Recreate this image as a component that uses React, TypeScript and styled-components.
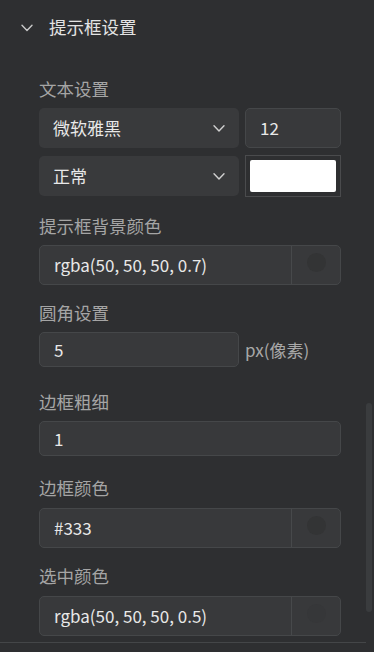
import React from 'react';
import styled, { createGlobalStyle } from 'styled-components';

const GlobalStyle = createGlobalStyle`
  html, body {
    margin: 0;
    padding: 0;
    background: #2e2f31;
  }
  body {
    font-family: 'Noto Sans CJK SC', 'Noto Sans', sans-serif;
  }
`;

const Chevron = ({ width, height }: { width: number; height: number }) => (
  <svg width={width} height={height} viewBox="0 0 12 8" fill="none">
    <path d="M1 1.2 L6 6.6 L11 1.2" stroke="currentColor" strokeWidth="1.4" strokeLinecap="round" strokeLinejoin="round" />
  </svg>
);

type ColorFieldProps = { value: string; swatch: string };

const ColorField = ({ value, swatch }: ColorFieldProps) => (
  <ColorInput>
    <ValueText>{value}</ValueText>
    <SwatchCell>
      <Dot style={{ background: swatch }} />
    </SwatchCell>
  </ColorInput>
);

const App = () => {
  return (
    <>
      <GlobalStyle />
      <Panel>
        <Header>
          <HeaderIcon>
            <Chevron width={12} height={8} />
          </HeaderIcon>
          <Title>提示框设置</Title>
        </Header>

        <Body>
          <Field $top={23}>
            <Label>文本设置</Label>
            <Row>
              <Select>
                <ValueText>微软雅黑</ValueText>
                <SelectArrow>
                  <Chevron width={12} height={9} />
                </SelectArrow>
              </Select>
              <TextInput $height={40}>
                <ValueText>12</ValueText>
              </TextInput>
            </Row>
            <Row $top={7}>
              <Select>
                <ValueText>正常</ValueText>
                <SelectArrow>
                  <Chevron width={12} height={9} />
                </SelectArrow>
              </Select>
              <SwatchBox>
                <SwatchFill />
              </SwatchBox>
            </Row>
          </Field>

          <Field $top={17}>
            <Label>提示框背景颜色</Label>
            <ColorField value="rgba(50, 50, 50, 0.7)" swatch="#333435" />
          </Field>

          <Field $top={16}>
            <Label>圆角设置</Label>
            <Row>
              <TextInput $height={35} $width={200}>
                <ValueText>5</ValueText>
              </TextInput>
              <Unit>px(像素)</Unit>
            </Row>
          </Field>

          <Field $top={23}>
            <Label>边框粗细</Label>
            <TextInput $height={35}>
              <ValueText>1</ValueText>
            </TextInput>
          </Field>

          <Field $top={20}>
            <Label $gap={8}>边框颜色</Label>
            <ColorField value="#333" swatch="#333435" />
          </Field>

          <Field $top={16}>
            <Label $gap={8}>选中颜色</Label>
            <ColorField value="rgba(50, 50, 50, 0.5)" swatch="#363739" />
          </Field>
        </Body>

        <Divider />
        <ScrollThumb />
      </Panel>
    </>
  );
};

const Panel = styled.div`
  position: relative;
  width: 374px;
  height: 652px;
  overflow: hidden;
  background: #2e2f31;
`;

const Header = styled.div`
  display: flex;
  align-items: center;
  height: 54px;
  padding-left: 21px;
  box-sizing: border-box;
`;

const HeaderIcon = styled.span`
  display: flex;
  color: #c8c8c8;
  margin-right: 16px;
  margin-top: 1px;
`;

const Title = styled.span`
  font-size: 17.5px;
  line-height: 24px;
  color: #e4e4e4;
`;

const Body = styled.div`
  padding: 0 33px 0 39px;
`;

const Field = styled.div<{ $top: number }>`
  margin-top: ${({ $top }) => $top}px;
`;

const Label = styled.div<{ $gap?: number }>`
  font-size: 17.5px;
  line-height: 24px;
  color: #a5a5a5;
  margin-bottom: ${({ $gap }) => $gap ?? 7}px;
`;

const Row = styled.div<{ $top?: number }>`
  display: flex;
  align-items: center;
  gap: 6px;
  margin-top: ${({ $top }) => $top ?? 0}px;
`;

const Select = styled.div`
  flex: 0 0 200px;
  height: 40px;
  box-sizing: border-box;
  display: flex;
  align-items: center;
  justify-content: space-between;
  padding: 0 14px 0 14px;
  background: #393a3c;
  border-radius: 5px;
`;

const SelectArrow = styled.span`
  display: flex;
  color: #d0d0d0;
`;

const TextInput = styled.div<{ $height: number; $width?: number }>`
  ${({ $width }) => ($width ? `flex: 0 0 ${$width}px;` : 'flex: 1 1 auto;')}
  height: ${({ $height }) => $height}px;
  box-sizing: border-box;
  display: flex;
  align-items: center;
  padding: 0 14px;
  background: #38393b;
  border: 1px solid #454749;
  border-radius: 5px;
`;

const ValueText = styled.span`
  font-size: 17px;
  line-height: 24px;
  color: #e8e8e8;
  white-space: nowrap;
`;

const Unit = styled.span`
  font-size: 17px;
  line-height: 24px;
  color: #a8a8a8;
`;

const SwatchBox = styled.div`
  flex: 1;
  height: 42px;
  box-sizing: border-box;
  padding: 4px;
  border: 1px solid #4a4b4d;
  display: flex;
`;

const SwatchFill = styled.div`
  flex: 1;
  background: #ffffff;
  border-radius: 2px;
`;

const ColorInput = styled.div`
  height: 40px;
  box-sizing: border-box;
  display: flex;
  align-items: center;
  background: #38393b;
  border: 1px solid #454749;
  border-radius: 5px;
  padding-left: 14px;
`;

const SwatchCell = styled.div`
  margin-left: auto;
  width: 48px;
  height: 100%;
  border-left: 1px solid #47494b;
  display: flex;
  align-items: center;
  justify-content: center;
`;

const Dot = styled.span`
  width: 19px;
  height: 19px;
  border-radius: 50%;
  margin-top: -6px;
`;

const Divider = styled.div`
  position: absolute;
  left: 0;
  top: 642px;
  width: 366px;
  height: 1px;
  background: #444648;
`;

const ScrollThumb = styled.div`
  position: absolute;
  right: 2px;
  top: 403px;
  width: 6px;
  height: 209px;
  border-radius: 3px;
  background: #3a3c3e;
`;

export default App;
